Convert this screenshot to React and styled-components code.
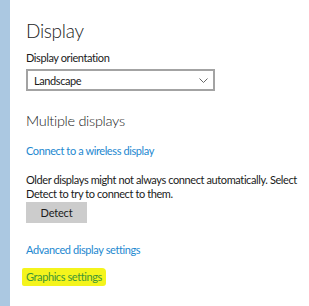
import React from "react";
import styled, { createGlobalStyle } from "styled-components";

const GlobalStyle = createGlobalStyle`
  html, body {
    margin: 0;
    padding: 0;
    background: #ffffff;
  }
  body {
    font-family: Lato, "Liberation Sans", sans-serif;
    color: #1b1b1b;
  }
`;

const Page = styled.div`
  display: flex;
  width: 309px;
  height: 306px;
  overflow: hidden;
  background: #fff;
`;

const Strip = styled.div`
  width: 10px;
  flex: none;
  background: #abc8e1;
`;

const Content = styled.div`
  flex: 1;
  display: flex;
  flex-direction: column;
  padding: 17px 0 0 16px;
  font-size: 11px;
  letter-spacing: -0.4px;
`;

const Title = styled.h1`
  margin: 0;
  font-size: 19px;
  font-weight: 300;
  line-height: 28px;
  letter-spacing: -0.3px;
`;

const Subtitle = styled.h2`
  margin: 20px 0 0;
  font-size: 14.5px;
  font-weight: 300;
  line-height: 20px;
  letter-spacing: -0.3px;
`;

const Label = styled.div`
  margin-top: 5px;
  line-height: 16px;
`;

const Select = styled.div`
  margin-top: 3px;
  width: 189px;
  height: 22px;
  box-sizing: border-box;
  border: 2px solid #a3a3a3;
  display: flex;
  align-items: center;
  justify-content: space-between;
  padding: 0 5px 0 6px;
`;

const Link = styled.a`
  align-self: flex-start;
  margin-top: ${(p) => p.$top || 0}px;
  line-height: 16px;
  color: #2388d0;
  text-decoration: none;
`;

const Highlight = styled.a`
  align-self: flex-start;
  margin: 10px 0 0 -4px;
  padding: 1px 4px;
  line-height: 16px;
  color: #3e9636;
  background: #f4f41c;
  border-radius: 2px 4px 3px 2px;
  text-decoration: none;
`;

const Paragraph = styled.p`
  margin: 14px 0 0;
  line-height: 14px;
  width: 280px;
`;

const Button = styled.button`
  margin-top: 1px;
  width: 61px;
  height: 21px;
  border: none;
  background: #cccccc;
  font-family: inherit;
  font-size: 11px;
  letter-spacing: -0.2px;
  color: #1b1b1b;
  padding: 0;
`;

export default function App() {
  return (
    <>
      <GlobalStyle />
      <Page>
        <Strip />
        <Content>
          <Title>Display</Title>
          <Label>Display orientation</Label>
          <Select>
            <span>Landscape</span>
            <svg width="9" height="5" viewBox="0 0 9 5">
              <path d="M0.5 0.5 L4.5 4.5 L8.5 0.5" fill="none" stroke="#666" strokeWidth="1" />
            </svg>
          </Select>
          <Subtitle>Multiple displays</Subtitle>
          <Link $top={12}>Connect to a wireless display</Link>
          <Paragraph>
            Older displays might not always connect automatically. Select Detect to try to connect to them.
          </Paragraph>
          <Button>Detect</Button>
          <Link $top={19}>Advanced display settings</Link>
          <Highlight>Graphics settings</Highlight>
        </Content>
      </Page>
    </>
  );
}
